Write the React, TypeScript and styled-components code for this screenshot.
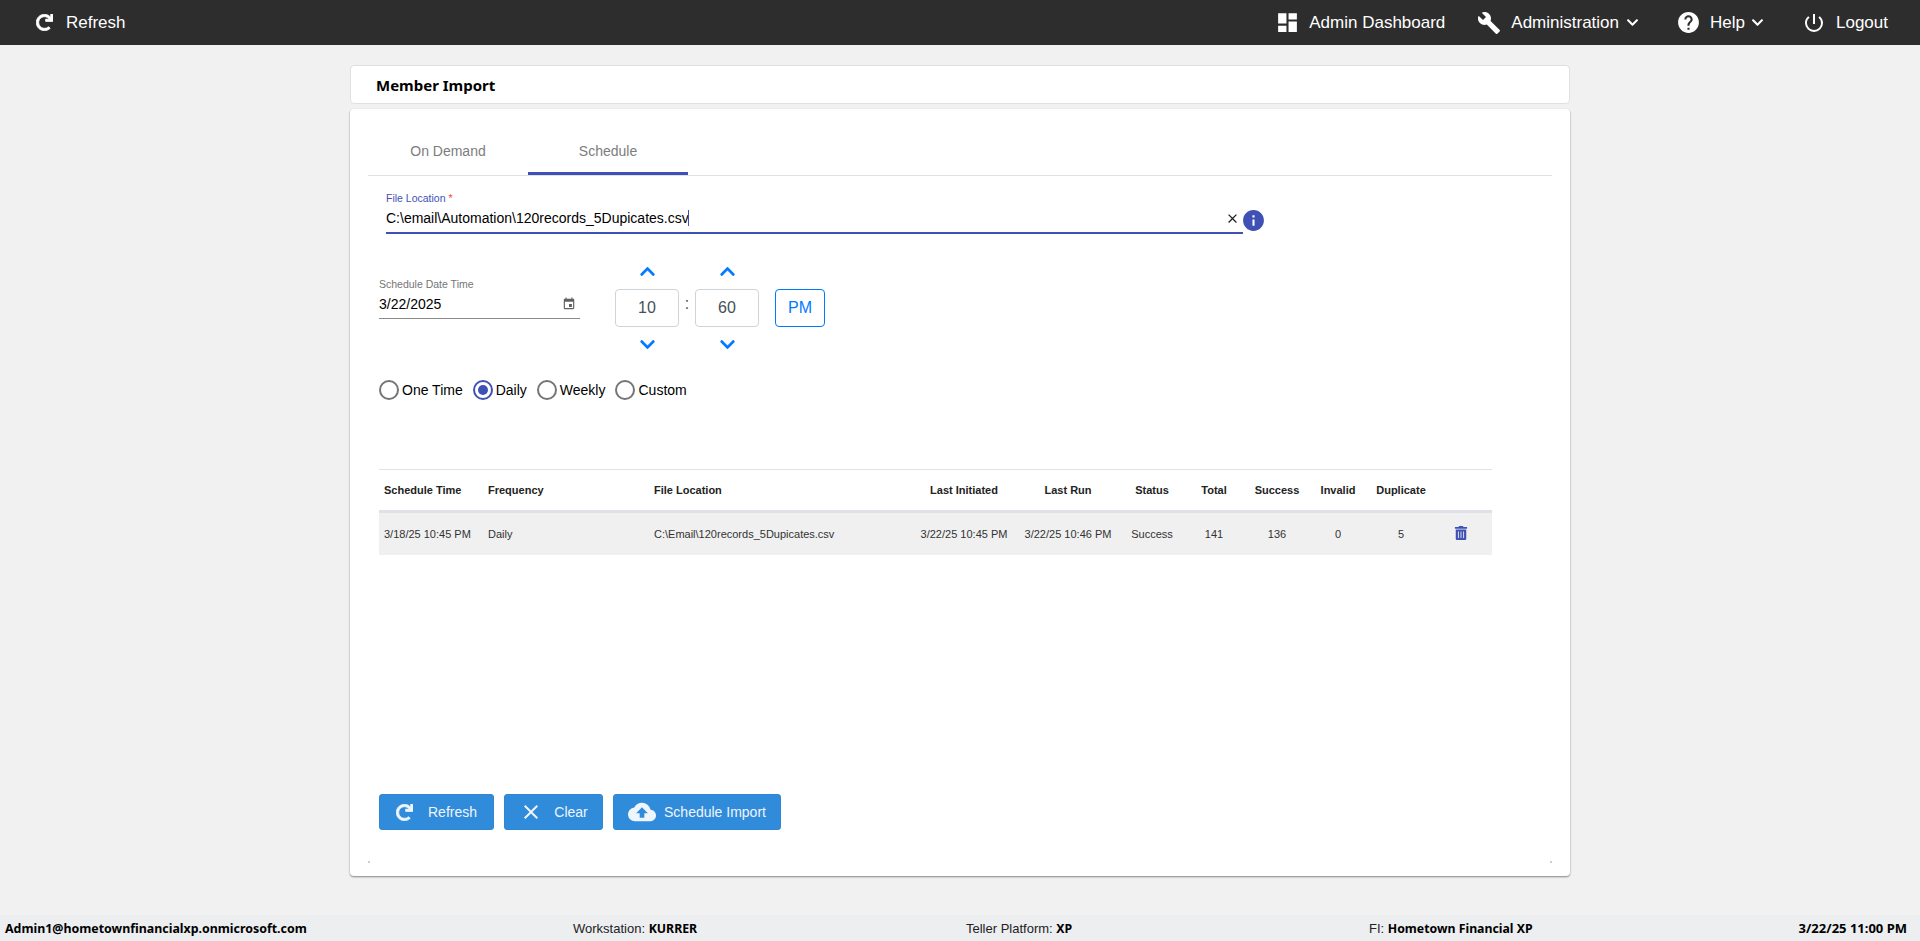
import React from "react";
import styled, { createGlobalStyle } from "styled-components";
import {
  MdBuild, MdClear, MdClose, MdCloudUpload, MdDashboard, MdEvent,
  MdHelp, MdInfo, MdPowerSettingsNew,
} from "react-icons/md";
import { FaChevronDown, FaChevronUp, FaRedo, FaTrashAlt } from "react-icons/fa";

const Global = createGlobalStyle`
  html, body { margin: 0; padding: 0; height: 100%; }
  body { background: #f1f1f1; font-family: "Liberation Sans", Arial, sans-serif; color: #000; }
  #root { min-height: 941px; }
`;

const Shell = styled.div`
  height: 941px;
  display: flex;
  flex-direction: column;
  overflow: hidden;
`;

const TopBar = styled.header`
  height: 45px;
  flex: none;
  background: #2d2d2d;
  color: #fff;
  display: flex;
  align-items: center;
  justify-content: space-between;
  padding: 0 32px 0 36px;
  font-size: 17px;
`;

const TopGroup = styled.nav`
  display: flex;
  align-items: center;
`;

const TopItem = styled.div<{ $gap?: number; $ml?: number }>`
  display: flex;
  align-items: center;
  gap: ${(p) => p.$gap ?? 9}px;
  margin-left: ${(p) => p.$ml ?? 0}px;
  white-space: nowrap;
`;

const NavChevron = styled(FaChevronDown)`
  margin-left: -3px;
`;

const ThickRedo = styled(FaRedo)`
  stroke: currentColor;
  stroke-width: 24px;
`;

const Page = styled.main`
  flex: 1;
  width: 1220px;
  margin: 0 auto;
  padding-top: 20px;
  display: flex;
  flex-direction: column;
  gap: 5px;
`;

const TitleCard = styled.div`
  height: 37px;
  flex: none;
  background: #fff;
  border: 1px solid #e0e0e0;
  border-radius: 4px;
  display: flex;
  align-items: center;
  padding-left: 25px;
`;

const Title = styled.h1`
  margin: 0;
  font: 700 15px "Noto Sans", sans-serif;
  color: #000;
`;

const MainCard = styled.section`
  position: relative;
  height: 767px;
  flex: none;
  background: #fff;
  border-radius: 4px;
  box-shadow: 0 1px 2px rgba(0, 0, 0, 0.45);
  padding: 0 18px;
  box-sizing: border-box;
  display: flex;
  flex-direction: column;
`;

const Tabs = styled.div`
  display: flex;
  height: 67px;
  flex: none;
  padding-top: 21px;
  box-sizing: border-box;
  border-bottom: 1px solid #e0e0e0;
`;

const Tab = styled.div<{ $active?: boolean }>`
  width: 160px;
  height: 45px;
  box-sizing: border-box;
  text-align: center;
  font-size: 14px;
  line-height: 42px;
  color: #7d7d7d;
  border-bottom: 3px solid ${(p) => (p.$active ? "#3f51b5" : "transparent")};
`;

const FileRow = styled.div`
  display: flex;
  align-items: flex-start;
  margin: 15px 0 0 18px;
`;

const FileField = styled.div`
  position: relative;
  width: 857px;
  height: 43px;
  padding-top: 1px;
  border-bottom: 2px solid #3f51b5;
  box-sizing: border-box;
`;

const FloatLabel = styled.label<{ $focused?: boolean }>`
  display: block;
  font-size: 10.5px;
  line-height: 12px;
  color: ${(p) => (p.$focused ? "#3f51b5" : "#757575")};
`;

const Req = styled.span`
  color: #f44336;
`;

const FileValue = styled.div`
  margin-top: 4px;
  font-size: 14px;
  line-height: 20px;
  display: flex;
  align-items: center;
`;

const Caret = styled.span`
  width: 1px;
  height: 16px;
  background: #3f51b5;
  margin-left: -1px;
`;

const ClearBtn = styled.span`
  position: absolute;
  right: 3px;
  top: 20px;
  display: flex;
  color: #222;
`;

const InfoBtn = styled.span`
  display: flex;
  color: #3f51b5;
  margin: 17px 0 0 -2px;
`;

const DateRow = styled.div`
  display: flex;
  margin: 27px 0 0 11px;
`;

const DateField = styled.div`
  position: relative;
  width: 201px;
  height: 41px;
  margin-top: 17px;
  border-bottom: 1px solid #8a8a8a;
  box-sizing: border-box;
`;

const DateValue = styled.div`
  font-size: 14px;
  line-height: 20px;
  margin-top: 4px;
`;

const CalIcon = styled.span`
  position: absolute;
  right: 4px;
  top: 19px;
  display: flex;
  color: #616161;
`;

const TimeGroup = styled.div`
  display: flex;
  margin-left: 35px;
`;

const Spinner = styled.div`
  width: 64px;
  display: flex;
  flex-direction: column;
  align-items: center;
  color: #007bff;
`;

const Chevron = styled.span<{ $top: number; $bottom: number }>`
  display: flex;
  height: 12px;
  align-items: center;
  margin: ${(p) => p.$top}px 0 ${(p) => p.$bottom}px;
`;

const TimeBox = styled.div`
  width: 64px;
  height: 38px;
  flex: none;
  box-sizing: border-box;
  border: 1px solid #ced4da;
  border-radius: 4px;
  display: flex;
  align-items: center;
  justify-content: center;
  font-size: 16px;
  color: #495057;
`;

const Colon = styled.div`
  width: 16px;
  margin-top: 33px;
  text-align: center;
  font-size: 16px;
  line-height: 20px;
  color: #495057;
`;

const PmButton = styled.div`
  width: 50px;
  height: 38px;
  margin: 28px 0 0 16px;
  box-sizing: border-box;
  border: 1px solid #007bff;
  border-radius: 4px;
  color: #007bff;
  font-size: 16px;
  display: flex;
  align-items: center;
  justify-content: center;
`;

const RadioRow = styled.div`
  display: flex;
  margin: 30px 0 0 11px;
  height: 20px;
  align-items: center;
`;

const RadioItem = styled.label`
  display: flex;
  align-items: center;
  gap: 3px;
  margin-right: 10px;
  font-size: 14px;
`;

const RadioDot = styled.span<{ $on?: boolean }>`
  width: 20px;
  height: 20px;
  box-sizing: border-box;
  border-radius: 50%;
  border: 2px solid ${(p) => (p.$on ? "#3f51b5" : "#757575")};
  display: flex;
  align-items: center;
  justify-content: center;
  &::after {
    content: "";
    width: 10px;
    height: 10px;
    border-radius: 50%;
    background: ${(p) => (p.$on ? "#3f51b5" : "transparent")};
  }
`;

const Table = styled.table`
  width: 1113px;
  margin: 69px 0 0 11px;
  border-collapse: collapse;
  table-layout: fixed;
  border-top: 1px solid #e3e3e3;
  font-size: 11px;
  color: #333;
`;

const Th = styled.th<{ $left?: boolean }>`
  height: 40px;
  padding: 0 0 0 ${(p) => (p.$left ? 5 : 0)}px;
  font-weight: 700;
  color: #222;
  text-align: ${(p) => (p.$left ? "left" : "center")};
  border-bottom: 3px solid #dee2e8;
  white-space: nowrap;
`;

const Td = styled.td<{ $left?: boolean }>`
  height: 42px;
  padding: 0 0 0 ${(p) => (p.$left ? 5 : 0)}px;
  background: #f0f0f0;
  text-align: ${(p) => (p.$left ? "left" : "center")};
  white-space: nowrap;
`;

const Trash = styled.span`
  display: inline-flex;
  color: #3f51b5;
  margin: 0 6px 3px 0;
`;

const Actions = styled.div`
  margin: auto 0 46px 11px;
  display: flex;
  gap: 10px;
`;

const ActionButton = styled.button<{ $w: number; $gap: number }>`
  width: ${(p) => p.$w}px;
  height: 36px;
  box-sizing: border-box;
  border: 1px solid #2f86d3;
  border-radius: 3px;
  background: #318bdb;
  color: #eef5fc;
  font: 14px "Liberation Sans", Arial, sans-serif;
  display: flex;
  align-items: center;
  justify-content: center;
  gap: ${(p) => p.$gap}px;
  padding: 0;
`;

const CornerMark = styled.span<{ $right?: boolean }>`
  position: absolute;
  bottom: 13px;
  ${(p) => (p.$right ? "right: 18px;" : "left: 18px;")}
  width: 2px;
  height: 2px;
  background: #cfcfcf;
`;

const Footer = styled.footer`
  height: 26px;
  flex: none;
  background: #eceef0;
  display: grid;
  grid-template-columns: 568px 393px 403px 1fr auto;
  align-items: center;
  padding: 0 13px 0 5px;
  font-size: 13px;
  color: #222;
  white-space: nowrap;
`;

const FooterItem = styled.div``;

const Strong = styled.b<{ $size?: number }>`
  font: 700 ${(p) => p.$size ?? 12.3}px "Noto Sans", sans-serif;
  color: #000;
`;

const rows = [
  ["3/18/25 10:45 PM", "Daily", "C:\\Email\\120records_5Dupicates.csv", "3/22/25 10:45 PM", "3/22/25 10:46 PM", "Success", "141", "136", "0", "5"],
];
const headers = ["Schedule Time", "Frequency", "File Location", "Last Initiated", "Last Run", "Status", "Total", "Success", "Invalid", "Duplicate", ""];
const widths = [104, 166, 263, 104, 104, 64, 60, 66, 56, 70, 56];

export default function App() {
  return (
    <Shell>
      <Global />
      <TopBar>
        <TopGroup>
          <TopItem $gap={13}><ThickRedo size={17} /><span>Refresh</span></TopItem>
        </TopGroup>
        <TopGroup>
          <TopItem $gap={9}><MdDashboard size={25} /><span>Admin Dashboard</span></TopItem>
          <TopItem $gap={10} $ml={32}><MdBuild size={24} /><span>Administration</span><NavChevron size={13} /></TopItem>
          <TopItem $gap={9} $ml={37}><MdHelp size={25} /><span>Help</span><NavChevron size={13} /></TopItem>
          <TopItem $gap={10} $ml={38}><MdPowerSettingsNew size={24} /><span>Logout</span></TopItem>
        </TopGroup>
      </TopBar>

      <Page>
        <TitleCard><Title>Member Import</Title></TitleCard>
        <MainCard>
          <Tabs>
            <Tab>On Demand</Tab>
            <Tab $active>Schedule</Tab>
          </Tabs>
          <FileRow>
            <FileField>
              <FloatLabel $focused>File Location <Req>*</Req></FloatLabel>
              <FileValue>C:\email\Automation\120records_5Dupicates.csv<Caret /></FileValue>
              <ClearBtn><MdClose size={15} /></ClearBtn>
            </FileField>
            <InfoBtn><MdInfo size={25} /></InfoBtn>
          </FileRow>
          <DateRow>
            <DateField>
              <FloatLabel>Schedule Date Time</FloatLabel>
              <DateValue>3/22/2025</DateValue>
              <CalIcon><MdEvent size={14} /></CalIcon>
            </DateField>
            <TimeGroup>
              <Spinner>
                <Chevron $top={4} $bottom={12}><FaChevronUp size={17} /></Chevron>
                <TimeBox>10</TimeBox>
                <Chevron $top={11} $bottom={0}><FaChevronDown size={17} /></Chevron>
              </Spinner>
              <Colon>:</Colon>
              <Spinner>
                <Chevron $top={4} $bottom={12}><FaChevronUp size={17} /></Chevron>
                <TimeBox>60</TimeBox>
                <Chevron $top={11} $bottom={0}><FaChevronDown size={17} /></Chevron>
              </Spinner>
              <PmButton>PM</PmButton>
            </TimeGroup>
          </DateRow>
          <RadioRow>
            <RadioItem><RadioDot />One Time</RadioItem>
            <RadioItem><RadioDot $on />Daily</RadioItem>
            <RadioItem><RadioDot />Weekly</RadioItem>
            <RadioItem><RadioDot />Custom</RadioItem>
          </RadioRow>
          <Table>
            <colgroup>
              {widths.map((w, i) => <col key={i} width={w} />)}
            </colgroup>
            <thead>
              <tr>
                {headers.map((h, i) => <Th key={i} $left={i < 3}>{h}</Th>)}
              </tr>
            </thead>
            <tbody>
              {rows.map((r, ri) => (
                <tr key={ri}>
                  {r.map((c, i) => <Td key={i} $left={i < 3}>{c}</Td>)}
                  <Td><Trash><FaTrashAlt size={14} /></Trash></Td>
                </tr>
              ))}
            </tbody>
          </Table>
          <Actions>
            <ActionButton $w={115} $gap={15}><ThickRedo size={17} />Refresh</ActionButton>
            <ActionButton $w={99} $gap={11}><MdClear size={24} />Clear</ActionButton>
            <ActionButton $w={168} $gap={8}><MdCloudUpload size={28} />Schedule Import</ActionButton>
          </Actions>
          <CornerMark />
          <CornerMark $right />
        </MainCard>
      </Page>

      <Footer>
        <FooterItem><Strong $size={12.4}>Admin1@hometownfinancialxp.onmicrosoft.com</Strong></FooterItem>
        <FooterItem>Workstation: <Strong>KURRER</Strong></FooterItem>
        <FooterItem>Teller Platform: <Strong>XP</Strong></FooterItem>
        <FooterItem>FI: <Strong>Hometown Financial XP</Strong></FooterItem>
        <FooterItem><Strong $size={13}>3/22/25 11:00 PM</Strong></FooterItem>
      </Footer>
    </Shell>
  );
}
